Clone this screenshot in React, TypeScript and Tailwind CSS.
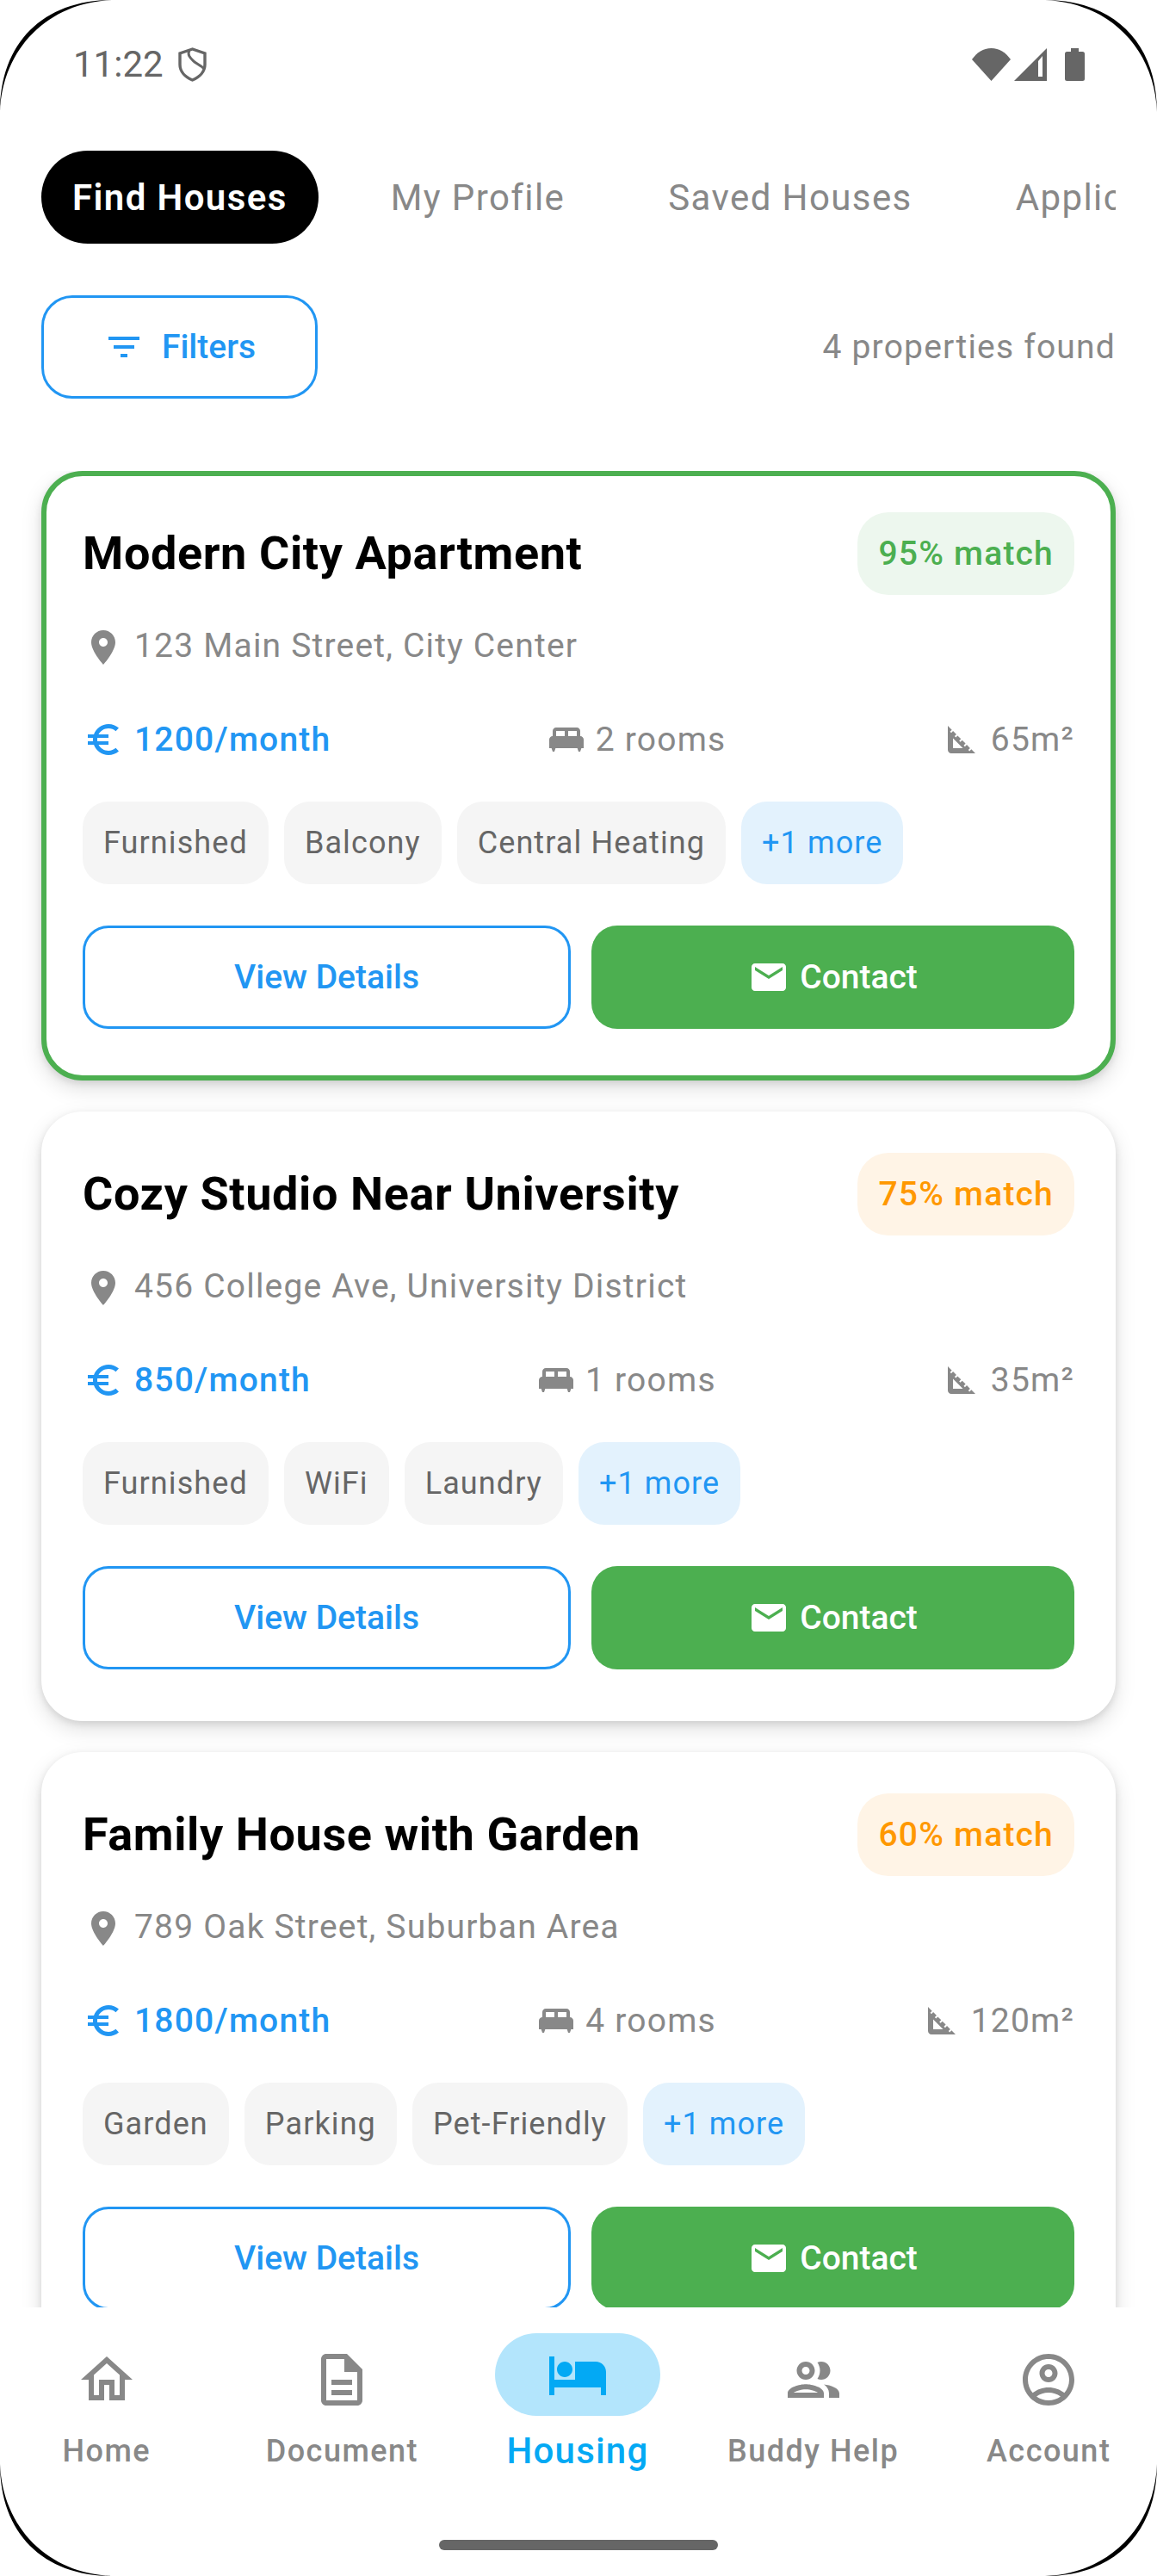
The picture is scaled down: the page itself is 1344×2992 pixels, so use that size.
import React from "react";

const P = {
  filter: "M10 18h4v-2h-4v2zM3 6v2h18V6H3zm3 7h12v-2H6v2z",
  pin: "M12 2C8.13 2 5 5.13 5 9c0 5.25 7 13 7 13s7-7.75 7-13c0-3.87-3.13-7-7-7zm0 9.5c-1.38 0-2.5-1.12-2.5-2.5s1.12-2.5 2.5-2.5 2.5 1.12 2.5 2.5-1.12 2.5-2.5 2.5z",
  euro: "M15 18.5c-2.51 0-4.68-1.42-5.76-3.5H15v-2H8.58c-.05-.33-.08-.66-.08-1s.03-.67.08-1H15V9H9.24C10.32 6.92 12.5 5.5 15 5.5c1.61 0 3.09.59 4.23 1.57L21 5.3C19.41 3.87 17.3 3 15 3c-3.92 0-7.24 2.51-8.48 6H3v2h3.06c-.04.33-.06.66-.06 1s.02.67.06 1H3v2h3.52c1.24 3.49 4.56 6 8.48 6 2.31 0 4.41-.87 6-2.3l-1.78-1.77c-1.13.98-2.6 1.57-4.22 1.57z",
  bed: "M20 10V7c0-1.1-.9-2-2-2H6c-1.1 0-2 .9-2 2v3c-1.1 0-2 .9-2 2v5h1.33L4 19h1l.67-2h12.67l.66 2h1l.67-2H22v-5c0-1.1-.9-2-2-2zm-9 0H6V7h5v3zm7 0h-5V7h5v3z",
  foot: "M17.66 17.66l-1.06 1.06-.71-.71 1.06-1.06-1.94-1.94-1.06 1.06-.71-.71 1.06-1.06-1.94-1.94-1.06 1.06-.71-.71 1.06-1.06L9.7 9.7l-1.06 1.06-.71-.71 1.06-1.06-1.94-1.94-1.06 1.06-.71-.71 1.06-1.06L4 4v14c0 1.1.9 2 2 2h14l-2.34-2.34zM7 17v-5.76L12.76 17H7z",
  mail: "M20 4H4c-1.1 0-1.99.9-1.99 2L2 18c0 1.1.9 2 2 2h16c1.1 0 2-.9 2-2V6c0-1.1-.9-2-2-2zm0 4l-8 5-8-5V6l8 5 8-5v2z",
  home: "M12 5.69l5 4.5V18h-2v-6H9v6H7v-7.81l5-4.5M12 3L2 12h3v8h6v-6h2v6h6v-8h3L12 3z",
  doc: "M8 16h8v2H8zm0-4h8v2H8zm6-10H6c-1.1 0-2 .9-2 2v16c0 1.1.89 2 1.99 2H18c1.1 0 2-.9 2-2V8l-6-6zm4 18H6V4h7v5h5v11z",
  hotel: "M7 13c1.66 0 3-1.34 3-3S8.66 7 7 7s-3 1.34-3 3 1.34 3 3 3zm12-6h-8v7H3V5H1v15h2v-3h18v3h2v-9c0-2.21-1.79-4-4-4z",
  people: "M9 13.75c-2.34 0-7 1.17-7 3.5V19h14v-1.75c0-2.33-4.66-3.5-7-3.5zM4.34 17c.84-.58 2.87-1.25 4.66-1.25s3.82.67 4.66 1.25H4.34zM9 12c1.93 0 3.5-1.57 3.5-3.5S10.93 5 9 5 5.5 6.57 5.5 8.5 7.07 12 9 12zm0-5c.83 0 1.5.67 1.5 1.5S9.83 10 9 10s-1.5-.67-1.5-1.5S8.17 7 9 7zm7.04 6.81c1.16.84 1.96 1.96 1.96 3.44V19h4v-1.75c0-2.02-3.5-3.17-5.96-3.44zM15 12c1.93 0 3.5-1.57 3.5-3.5S16.93 5 15 5c-.54 0-1.04.13-1.5.35.63.89 1 1.98 1 3.15s-.37 2.26-1 3.15c.46.22.96.35 1.5.35z",
  account: "M12 2C6.48 2 2 6.48 2 12s4.48 10 10 10 10-4.48 10-10S17.52 2 12 2zM7.35 18.5C8.66 17.56 10.26 17 12 17s3.34.56 4.65 1.5c-1.31.94-2.91 1.5-4.65 1.5s-3.34-.56-4.65-1.5zm10.79-1.38C16.45 15.8 14.32 15 12 15s-4.45.8-6.14 2.12C4.7 15.73 4 13.95 4 12c0-4.42 3.58-8 8-8s8 3.58 8 8c0 1.95-.7 3.73-1.86 5.12zM12 6c-1.93 0-3.5 1.57-3.5 3.5S10.07 13 12 13s3.5-1.57 3.5-3.5S13.93 6 12 6zm0 5c-.83 0-1.5-.67-1.5-1.5S11.17 8 12 8s1.5.67 1.5 1.5S12.83 11 12 11z",
};

function Icon({ d, className }: { d: string; className: string }) {
  return (
    <svg viewBox="0 0 24 24" className={className} fill="currentColor">
      <path d={d} />
    </svg>
  );
}

function Corner({ className }: { className: string }) {
  return (
    <svg viewBox="0 0 130 130" className={`absolute w-[130px] h-[130px] ${className}`}>
      <path d="M0 130C0 50 50 0 130 0C56 3 3 56 0 130Z" fill="#000" />
    </svg>
  );
}

type House = {
  title: string;
  match: string;
  high: boolean;
  address: string;
  price: string;
  rooms: string;
  area: string;
  tags: string[];
};

const houses: House[] = [
  { title: "Modern City Apartment", match: "95% match", high: true, address: "123 Main Street, City Center", price: "1200/month", rooms: "2 rooms", area: "65m²", tags: ["Furnished", "Balcony", "Central Heating"] },
  { title: "Cozy Studio Near University", match: "75% match", high: false, address: "456 College Ave, University District", price: "850/month", rooms: "1 rooms", area: "35m²", tags: ["Furnished", "WiFi", "Laundry"] },
  { title: "Family House with Garden", match: "60% match", high: false, address: "789 Oak Street, Suburban Area", price: "1800/month", rooms: "4 rooms", area: "120m²", tags: ["Garden", "Parking", "Pet-Friendly"] },
];

function Card({ h }: { h: House }) {
  return (
    <div
      className={`shrink-0 h-[708px] rounded-[48px] border-[6px] bg-white p-[42px] shadow-[0_9px_24px_rgba(0,0,0,0.13),0_3px_9px_rgba(0,0,0,0.1)] ${
        h.high ? "border-[#4caf50]" : "border-white"
      }`}
    >
      <div className="flex h-[96px] items-center justify-between">
        <span className="text-[54px] leading-[72px] font-bold text-black tracking-[0.6px]">{h.title}</span>
        <span
          className={`flex h-[96px] items-center rounded-[36px] px-[24px] text-[39px] font-medium tracking-[1.2px] ${
            h.high ? "bg-[#edf7ee] text-[#4caf50]" : "bg-[#fff4e6] text-[#ff9800]"
          }`}
        >
          {h.match}
        </span>
      </div>
      <div className="mt-[35px] flex h-[48px] items-center gap-[12px] text-[39px] tracking-[1.2px] text-[#888888]">
        <Icon d={P.pin} className="h-[48px] w-[48px] mt-[4px]" />
        <span>{h.address}</span>
      </div>
      <div className="mt-[61px] flex h-[48px] items-center justify-between text-[39px] tracking-[1.2px] text-[#888888]">
        <div className="flex items-center gap-[12px] font-medium text-[#2196f3]">
          <Icon d={P.euro} className="h-[48px] w-[48px]" />
          <span>{h.price}</span>
        </div>
        <div className="flex items-center gap-[10px]">
          <Icon d={P.bed} className="h-[48px] w-[48px]" />
          <span>{h.rooms}</span>
        </div>
        <div className="flex items-center gap-[10px]">
          <Icon d={P.foot} className="h-[48px] w-[48px]" />
          <span>{h.area}</span>
        </div>
      </div>
      <div className="mt-[48px] flex gap-[18px] text-[36px] tracking-[1.1px]">
        {h.tags.map((t) => (
          <span key={t} className="flex h-[96px] items-center rounded-[30px] bg-[#f5f5f5] px-[24px] text-[#666666]">
            {t}
          </span>
        ))}
        <span className="flex h-[96px] items-center rounded-[30px] bg-[#e3f2fd] px-[24px] text-[#2196f3]">+1 more</span>
      </div>
      <div className="mt-[48px] flex gap-[24px] text-[39px] font-medium">
        <button className="flex h-[120px] flex-1 items-center justify-center rounded-[30px] border-[3px] border-[#2196f3] text-[#2196f3]">
          View Details
        </button>
        <button className="flex h-[120px] flex-1 items-center justify-center gap-[12px] rounded-[30px] bg-[#4caf50] text-white">
          <Icon d={P.mail} className="h-[48px] w-[48px]" />
          Contact
        </button>
      </div>
    </div>
  );
}

function NavItem({ d, label }: { d: string; label: string }) {
  return (
    <div className="flex w-[240px] flex-col items-center pt-[48px] text-[#888888]">
      <Icon d={d} className="h-[72px] w-[72px]" />
      <span className="mt-[23px] text-[36px] leading-[48px] font-medium tracking-[1.5px]">{label}</span>
    </div>
  );
}

export default function App() {
  return (
    <div className="relative flex h-[2992px] w-[1344px] flex-col overflow-hidden bg-white font-[Roboto,sans-serif]">
      <div className="flex h-[175px] shrink-0 items-start justify-between pl-[85px] pr-[84px] pt-[55px] text-[#666666]">
        <div className="flex h-[40px] items-center gap-[17px]">
          <span className="text-[42px] leading-[40px]">11:22</span>
          <svg viewBox="0 0 33 40" className="h-[40px] w-[33px]" fill="none" stroke="currentColor" strokeWidth="3.4">
            <path d="M16.5 2L2 7v13c0 8 6 14.500 14.500 18C25 34.500 31 28 31 20V7z" />
            <path d="M13 3c-3 7 2 10 6 14 4 3 9 5 11 8" strokeWidth="3" />
            <path d="M19 17c1 4 0 14-2 20" stroke="none" />
          </svg>
        </div>
        <div className="flex h-[40px] items-center">
          <svg viewBox="0 0 45 38" className="h-[38px] w-[45px]" fill="currentColor">
            <path d="M0 13C6 5 13 0 22.500 0S39 5 45 13L22.500 38Z" />
          </svg>
          <svg viewBox="0 0 38 38" className="ml-[4px] h-[38px] w-[38px]" fill="currentColor">
            <path fillRule="evenodd" d="M38 0V38H0ZM28 15V33H33V9Z" />
          </svg>
          <svg viewBox="0 0 23 38" className="ml-[21px] h-[38px] w-[23px]" fill="currentColor">
            <path d="M7 0H16V4H20.500Q23 4 23 6.500V35.500Q23 38 20.500 38H2.500Q0 38 0 35.500V6.500Q0 4 2.500 4H7Z" />
          </svg>
        </div>
      </div>

      <div className="mx-[48px] flex h-[108px] shrink-0 items-center gap-[48px] overflow-hidden text-[42px] tracking-[1.4px] text-[#888888]">
        <span className="flex h-[108px] shrink-0 items-center rounded-[54px] bg-black px-[36px] font-semibold text-white">Find Houses</span>
        <span className="shrink-0 px-[36px]">My Profile</span>
        <span className="shrink-0 px-[36px]">Saved Houses</span>
        <span className="shrink-0 px-[36px]">Applications</span>
      </div>

      <div className="mx-[48px] mt-[60px] flex shrink-0 items-center justify-between">
        <button className="flex h-[120px] w-[321px] items-center justify-center gap-[20px] rounded-[36px] border-[3px] border-[#2196f3] text-[39px] font-medium text-[#2196f3]">
          <Icon d={P.filter} className="h-[48px] w-[48px]" />
          Filters
        </button>
        <span className="text-[39px] tracking-[1.2px] text-[#888888]">4 properties found</span>
      </div>

      <div className="mt-[84px] flex min-h-0 flex-1 flex-col gap-[36px] overflow-hidden px-[48px]">
        {houses.map((h) => (
          <Card key={h.title} h={h} />
        ))}
      </div>

      <div className="relative h-[312px] shrink-0 bg-white">
        <div className="mr-[2px] flex justify-center gap-[33.6px]">
          <NavItem d={P.home} label="Home" />
          <NavItem d={P.doc} label="Document" />
          <div className="flex w-[240px] flex-col items-center pt-[30px] text-[#03a9f4]">
            <div className="flex h-[96px] w-[192px] items-center justify-center rounded-[48px] bg-[#b3e5fc]">
              <Icon d={P.hotel} className="h-[72px] w-[72px]" />
            </div>
            <span className="mt-[17px] text-[42px] leading-[48px] font-medium tracking-[1.2px]">Housing</span>
          </div>
          <NavItem d={P.people} label="Buddy Help" />
          <NavItem d={P.account} label="Account" />
        </div>
        <div className="mx-auto mt-[79px] h-[12px] w-[324px] rounded-[6px] bg-[#666666]" />
      </div>

      <Corner className="left-0 top-0" />
      <Corner className="right-0 top-0 -scale-x-100" />
      <Corner className="bottom-0 left-0 -scale-y-100" />
      <Corner className="bottom-0 right-0 -scale-100" />
    </div>
  );
}
